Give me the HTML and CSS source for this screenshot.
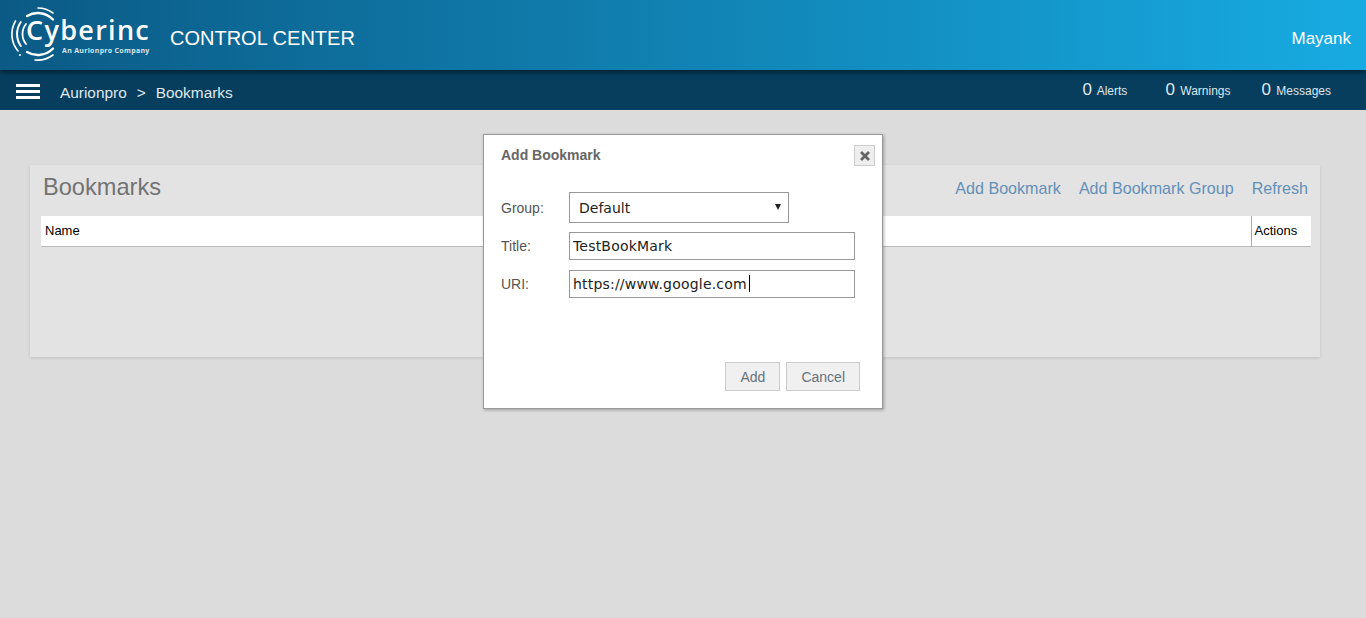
FILE: index.html
```html
<!DOCTYPE html>
<html lang="en">
<head>
  <meta charset="UTF-8">
  <title>Bookmarks</title>
  <link rel="stylesheet" href="styles.css">
</head>
<body>
  <header class="topbar">
    <div class="logo">
      <svg class="logo-rings" width="56" height="70" viewBox="0 0 56 70" fill="none" stroke="#fff" stroke-linecap="round">
        <path stroke-width="1.6" d="M38 8A26 26 0 0 1 53 13"/>
        <path stroke-width="1.6" d="M15.5 21A26 26 0 0 0 18 51"/>
        <path stroke-width="1.6" d="M35 60A26 26 0 0 0 53 55"/>
        <path stroke-width="2" d="M20.8 22A21 21 0 0 0 20.8 46"/>
        <path stroke-width="2.4" d="M27 16A21 21 0 0 1 53 19.5"/>
        <path stroke-width="2.4" d="M27 52A21 21 0 0 0 53 48.5"/>
        <path stroke-width="1.8" d="M26 24A16 16 0 0 0 26 44"/>
        <circle cx="20" cy="55" r="1" fill="#fff" stroke="none"/>
      </svg>
      <div class="logo-text">
        <span class="logo-name">Cyberinc</span>
        <span class="logo-sub">An Aurionpro Company</span>
      </div>
    </div>
    <div class="product">CONTROL CENTER</div>
    <div class="user">Mayank</div>
  </header>

  <nav class="subbar">
    <div class="burger"><span></span><span></span><span></span></div>
    <div class="crumbs">Aurionpro<span class="crumb-sep">&gt;</span>Bookmarks</div>
    <div class="counts">
      <div class="count"><b>0</b> Alerts</div>
      <div class="count"><b>0</b> Warnings</div>
      <div class="count"><b>0</b> Messages</div>
    </div>
  </nav>

  <main class="content">
    <section class="panel">
      <div class="panel-head">
        <h1>Bookmarks</h1>
        <div class="panel-links">
          <a href="#">Add Bookmark</a>
          <a href="#">Add Bookmark Group</a>
          <a href="#">Refresh</a>
        </div>
      </div>
      <table class="grid">
        <tr>
          <th>Name</th>
          <th class="col-actions">Actions</th>
        </tr>
      </table>
    </section>
  </main>

  <div class="modal">
    <div class="modal-head">
      <h2>Add Bookmark</h2>
      <button class="close">
        <svg width="10" height="10" viewBox="0 0 10 10" stroke="#666" stroke-width="2.8"><path d="M1 1L9 9M9 1L1 9"/></svg>
      </button>
    </div>
    <div class="form">
      <div class="row row-group">
        <label>Group:</label>
        <div class="select">Default<span class="arrow"></span></div>
      </div>
      <div class="row">
        <label>Title:</label>
        <input type="text" value="TestBookMark">
      </div>
      <div class="row">
        <label>URI:</label>
        <div class="field">
          <input type="text" value="https://www.google.com">
          <span class="caret"></span>
        </div>
      </div>
    </div>
    <div class="modal-foot">
      <button class="btn">Add</button>
      <button class="btn">Cancel</button>
    </div>
  </div>
</body>
</html>
```

FILE: styles.css
```css
* {
  box-sizing: border-box;
}
html, body {
  height: 100%;
}
body {
  margin: 0;
  background-color: #dcdcdc;
  font-family: "Liberation Sans", Arial, sans-serif;
  overflow: hidden;
}
.topbar {
  position: relative;
  z-index: 2;
  display: flex;
  align-items: center;
  height: 70px;
  padding: 0 15px 0 0;
  background: linear-gradient(to right, #0b5a85, #17abe2);
  box-shadow: 0 2px 5px rgba(0, 0, 0, 0.5);
  color: #fff;
}
.logo {
  display: flex;
  width: 170px;
  height: 70px;
}
.logo-rings {
  flex: none;
}
.logo-text {
  display: flex;
  flex-direction: column;
  margin-left: -30px;
  padding-top: 16px;
}
.logo-name {
  font-family: "Open Sans", sans-serif;
  font-size: 27px;
  line-height: 28px;
  font-weight: 600;
  letter-spacing: 1.3px;
  white-space: nowrap;
}
.logo-sub {
  margin-top: 2px;
  padding-left: 36px;
  font-family: "Open Sans", sans-serif;
  font-size: 7px;
  line-height: 9px;
  font-weight: 700;
  letter-spacing: 0.3px;
  white-space: nowrap;
  color: #d5e6ef;
}
.product {
  margin-top: 6px;
  font-size: 20px;
}
.user {
  margin-top: 7px;
  margin-left: auto;
  font-size: 17px;
}
.subbar {
  display: flex;
  align-items: center;
  height: 40px;
  padding: 0 35px 0 16px;
  background-color: #073d5d;
  color: #dfe8ee;
}
.burger {
  display: flex;
  flex-direction: column;
  gap: 3px;
  width: 24px;
  margin-top: 2px;
}
.burger span {
  height: 3px;
  background-color: #fff;
}
.crumbs {
  margin-top: 6px;
  margin-left: 20px;
  font-size: 15.4px;
}
.crumb-sep {
  margin: 0 10px;
}
.counts {
  display: grid;
  grid-template-columns: 83px 96px auto;
  margin-left: auto;
  font-size: 12px;
}
.count b {
  margin-right: 2px;
  font-size: 17px;
  font-weight: normal;
}
.content {
  padding: 55px 46px 0 30px;
}
.panel {
  height: 192px;
  padding: 0 9px 0 11px;
  background-color: #e3e3e3;
  box-shadow: 0 1px 3px rgba(0, 0, 0, 0.12);
}
.panel-head {
  display: flex;
  justify-content: space-between;
  height: 51px;
  padding: 8px 3px 0 2px;
}
h1 {
  margin: 0;
  font-size: 23.6px;
  line-height: 28px;
  font-weight: normal;
  color: #737373;
}
.panel-links {
  display: flex;
  gap: 18px;
  padding-top: 6px;
}
.panel-links a {
  font-size: 16.1px;
  color: #6390b8;
  text-decoration: none;
}
.grid {
  width: 100%;
  border-collapse: collapse;
  background-color: #fff;
  border-bottom: 1px solid #bbb;
}
.grid th {
  height: 30px;
  padding: 0 4px;
  font-size: 13px;
  font-weight: normal;
  text-align: left;
  color: #000;
}
.grid .col-actions {
  width: 60px;
  padding-left: 3px;
  border-left: 1px solid #aaa;
}
.modal {
  position: absolute;
  z-index: 3;
  top: 134px;
  left: 483px;
  display: flex;
  flex-direction: column;
  width: 400px;
  height: 275px;
  padding: 10px 22px 17px 17px;
  background-color: #fff;
  border: 1px solid #999;
  box-shadow: 1px 1px 3px rgba(0, 0, 0, 0.3);
}
.modal-head {
  display: flex;
  align-items: center;
  justify-content: space-between;
  margin-right: -15px;
}
h2 {
  margin: 0 0 2px;
  font-size: 14px;
  font-weight: bold;
  color: #666;
}
.close {
  display: flex;
  align-items: center;
  justify-content: center;
  width: 21px;
  height: 21px;
  padding: 0;
  background-color: #eee;
  border: 1px solid #ccc;
}
.form {
  display: flex;
  flex-direction: column;
  gap: 10px;
  margin-top: 26px;
}
.row {
  display: flex;
  align-items: center;
}
.row label {
  width: 68px;
  font-size: 14px;
  color: #555;
}
.row input {
  display: block;
  width: 286px;
  height: 28px;
  padding: 0 3px;
  border: 1px solid #999;
  font-family: "DejaVu Sans", Verdana, sans-serif;
  font-size: 14px;
  letter-spacing: 0.2px;
  color: #222;
  outline: none;
}
.row-group {
  margin-bottom: -1px;
}
.select {
  position: relative;
  width: 220px;
  height: 31px;
  padding-left: 9px;
  border: 1px solid #999;
  font-family: "DejaVu Sans", Verdana, sans-serif;
  font-size: 14px;
  line-height: 31px;
  color: #222;
}
.arrow {
  position: absolute;
  top: 11px;
  right: 7px;
  border-top: 6px solid #222;
  border-left: 3px solid transparent;
  border-right: 3px solid transparent;
}
.field {
  position: relative;
}
.caret {
  position: absolute;
  top: 5px;
  left: 180px;
  width: 1px;
  height: 17px;
  background-color: #000;
}
.modal-foot {
  display: flex;
  justify-content: flex-end;
  gap: 6px;
  margin-top: auto;
}
.btn {
  height: 29px;
  padding: 0 14px;
  background-color: #f0f0f0;
  border: 1px solid #ccc;
  font-family: "Liberation Sans", Arial, sans-serif;
  font-size: 14px;
  color: #68727c;
}
```
